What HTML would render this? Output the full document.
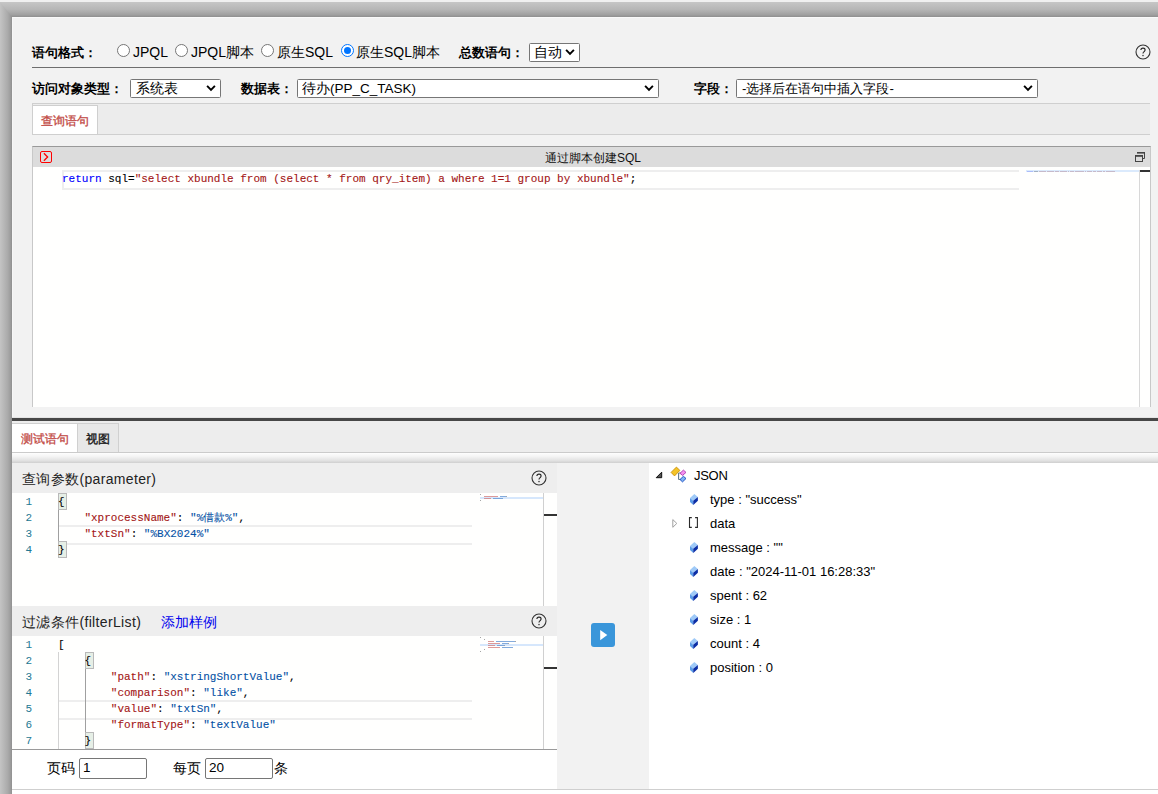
<!DOCTYPE html>
<html><head><meta charset="utf-8">
<style>
*{box-sizing:border-box}
html,body{margin:0;padding:0}
body{width:1158px;height:794px;overflow:hidden;position:relative;background:#fff;font-family:"Liberation Sans",sans-serif;color:#000}
.a{position:absolute}
.t{position:absolute;white-space:nowrap;line-height:1}
.b{font-weight:bold}
.lbl{font-size:13px;font-weight:bold}
.radio{position:absolute;width:13px;height:13px;border:1px solid #767676;border-radius:50%;background:#fff}
.radio.on{border:1px solid #0075ff;background:#fff}
.radio.on::after{content:"";position:absolute;left:2px;top:2px;width:7px;height:7px;border-radius:50%;background:#0075ff}
.sel{position:absolute;border:1px solid #767676;border-radius:1.5px;background:#fff}
.sel svg{position:absolute}
.help{position:absolute;width:15px;height:15px;border:1px solid #333;border-radius:50%;font-size:11px;text-align:center;line-height:13px;color:#222}
.mono{font-family:"Liberation Mono",monospace;font-size:11px;-webkit-text-stroke:0.1px}
.ln{position:absolute;width:20px;text-align:right;color:#237893;font-family:"Liberation Mono",monospace;font-size:11px;line-height:16px}
.k{color:#a31515}
.s{color:#0451a5}
.kw{color:#0000ff}
.str{color:#a31515}
.gem{position:absolute;width:9px;height:11px}
.tr{position:absolute;font-size:13px;white-space:nowrap;line-height:16px;color:#000}
</style></head><body>
<!-- top strip & shadow -->
<div class="a" style="left:0;top:0;width:1158px;height:2px;background:#f0f0f0"></div>
<div class="a" style="left:0;top:2px;width:1158px;height:15px;background:linear-gradient(#c6c6c6,#b6b6b6 50%,#a0a0a0 85%,#8f8f8f)"></div>
<div class="a" style="left:0;top:2px;width:12px;height:792px;background:linear-gradient(90deg,#c4c4c4,#aaaaaa 65%,#9a9a9a 90%,#8f8f8f);clip-path:polygon(0 0,12px 15px,12px 100%,0 100%)"></div>
<!-- main panel -->
<div class="a" style="left:12px;top:17px;width:1146px;height:777px;background:#f2f2f2;border-top:1px solid #f9f9f9;border-left:1px solid #f7f7f7"></div>

<!-- row 1 -->
<div class="t lbl" style="left:32px;top:46px">语句格式：</div>
<div class="radio" style="left:117px;top:44px"></div>
<div class="t" style="left:133px;top:45px;font-size:14px">JPQL</div>
<div class="radio" style="left:175px;top:44px"></div>
<div class="t" style="left:191px;top:45px;font-size:14px">JPQL脚本</div>
<div class="radio" style="left:261px;top:44px"></div>
<div class="t" style="left:277px;top:45px;font-size:14px">原生SQL</div>
<div class="radio on" style="left:341px;top:44px"></div>
<div class="t" style="left:356px;top:45px;font-size:14px">原生SQL脚本</div>
<div class="t lbl" style="left:459px;top:46px">总数语句：</div>
<div class="sel" style="left:529px;top:43px;width:51px;height:19px">
  <div class="t" style="left:4px;top:2px;font-size:13.5px">自动</div>
  <svg style="left:35px;top:4px" width="10" height="8" viewBox="0 0 10 8"><path d="M1.1 1.8 L5 5.9 L8.9 1.8" fill="none" stroke="#000" stroke-width="1.9"/></svg>
</div>
<svg class="a" style="left:1135px;top:44px" width="16" height="16" viewBox="0 0 16 16"><circle cx="8" cy="8" r="7" fill="none" stroke="#333" stroke-width="1.1"/><path d="M5.9 6.1 C5.9 4.8 6.8 4.1 8 4.1 C9.2 4.1 10.1 4.9 10.1 6 C10.1 7 9.4 7.4 8.8 7.9 C8.2 8.3 8 8.7 8 9.6" fill="none" stroke="#222" stroke-width="1.1"/><rect x="7.4" y="10.9" width="1.2" height="1.3" fill="#222"/></svg>
<div class="a" style="left:32px;top:67px;width:1118px;height:1px;background:#6e6e6e"></div>

<!-- row 2 -->
<div class="t lbl" style="left:32px;top:82px">访问对象类型：</div>
<div class="sel" style="left:130px;top:79px;width:91px;height:19px">
  <div class="t" style="left:5px;top:2px;font-size:13.5px">系统表</div>
  <svg style="left:75px;top:4px" width="10" height="8" viewBox="0 0 10 8"><path d="M1.1 1.8 L5 5.9 L8.9 1.8" fill="none" stroke="#000" stroke-width="1.9"/></svg>
</div>
<div class="t lbl" style="left:241px;top:82px">数据表：</div>
<div class="sel" style="left:297px;top:79px;width:362px;height:19px">
  <div class="t" style="left:4px;top:2px;font-size:13.5px">待办(PP_C_TASK)</div>
  <svg style="left:346px;top:4px" width="10" height="8" viewBox="0 0 10 8"><path d="M1.1 1.8 L5 5.9 L8.9 1.8" fill="none" stroke="#000" stroke-width="1.9"/></svg>
</div>
<div class="t lbl" style="left:694px;top:82px">字段：</div>
<div class="sel" style="left:736px;top:79px;width:302px;height:19px">
  <div class="t" style="left:5px;top:2px;font-size:13.25px">-选择后在语句中插入字段-</div>
  <svg style="left:286px;top:4px" width="10" height="8" viewBox="0 0 10 8"><path d="M1.1 1.8 L5 5.9 L8.9 1.8" fill="none" stroke="#000" stroke-width="1.9"/></svg>
</div>

<!-- tab bar top -->
<div class="a" style="left:32px;top:103px;width:1118px;height:32px;background:#ececec;border-top:1px solid #cfcfcf;border-bottom:1px solid #cfcfcf;border-left:1px solid #cfcfcf"></div>
<div class="a" style="left:32px;top:105px;width:66px;height:30px;background:#fff;border:1px solid #cfcfcf"></div>
<div class="t" style="left:41px;top:115px;font-size:12px;color:#c24a45;-webkit-text-stroke:0.3px #c24a45">查询语句</div>

<!-- editor panel -->
<div class="a" style="left:32px;top:146px;width:1119px;height:261px;background:#fffffe;border-top:1px solid #999;border-left:1px solid #c8c8c8;border-right:1px solid #c8c8c8"></div>
<div class="a" style="left:33px;top:147px;width:1117px;height:20px;background:#dcdcdc"></div>
<div class="a" style="left:40px;top:151px;width:12px;height:12px;border:1.6px solid #f00;border-radius:2px"></div>
<svg class="a" style="left:40px;top:151px" width="12" height="12" viewBox="0 0 12 12"><path d="M3.9 2.3 L7.6 6 L3.9 9.7" fill="none" stroke="#f00" stroke-width="1.3"/></svg>
<div class="t" style="left:545px;top:152px;font-size:12px;color:#111">通过脚本创建SQL</div>
<svg class="a" style="left:1134px;top:151px" width="12" height="12" viewBox="0 0 12 12"><path d="M3.5 1.5 H10.5 V7.5 H8.5" fill="none" stroke="#444" stroke-width="1"/><rect x="3" y="1" width="8" height="1.6" fill="#444"/><rect x="1.5" y="4.5" width="7" height="6" fill="none" stroke="#444" stroke-width="1"/><rect x="1" y="4" width="8" height="1.8" fill="#444"/></svg>
<div class="a" style="left:62px;top:170px;width:957px;height:20px;border:2px solid #eeeeee;border-right:none"></div>
<div class="t mono" style="left:62px;top:174px"><span class="kw">return</span> sql=<span class="str">"select xbundle from (select * from qry_item) a where 1=1 group by xbundle"</span>;</div>
<!-- minimap -->
<div class="a" style="left:1026px;top:170px;width:113px;height:2px;background:#dbeafc"></div>
<div class="a" style="left:1027px;top:171px;width:6px;height:1px;background:#8c9cf8;opacity:.6"></div>
<div class="a" style="left:1034px;top:171px;width:4px;height:1px;background:#7b8a9a;opacity:.6"></div>
<div class="a" style="left:1039px;top:171px;width:7px;height:1px;background:#b89aa8;opacity:.6"></div>
<div class="a" style="left:1047px;top:171px;width:7px;height:1px;background:#b89aa8;opacity:.6"></div>
<div class="a" style="left:1055px;top:171px;width:4px;height:1px;background:#b89aa8;opacity:.6"></div>
<div class="a" style="left:1060px;top:171px;width:7px;height:1px;background:#b89aa8;opacity:.6"></div>
<div class="a" style="left:1068px;top:171px;width:1px;height:1px;background:#b89aa8;opacity:.6"></div>
<div class="a" style="left:1070px;top:171px;width:4px;height:1px;background:#b89aa8;opacity:.6"></div>
<div class="a" style="left:1075px;top:171px;width:9px;height:1px;background:#b89aa8;opacity:.6"></div>
<div class="a" style="left:1085px;top:171px;width:1px;height:1px;background:#b89aa8;opacity:.6"></div>
<div class="a" style="left:1087px;top:171px;width:5px;height:1px;background:#b89aa8;opacity:.6"></div>
<div class="a" style="left:1093px;top:171px;width:3px;height:1px;background:#b89aa8;opacity:.6"></div>
<div class="a" style="left:1097px;top:171px;width:5px;height:1px;background:#b89aa8;opacity:.6"></div>
<div class="a" style="left:1103px;top:171px;width:2px;height:1px;background:#b89aa8;opacity:.6"></div>
<div class="a" style="left:1106px;top:171px;width:9px;height:1px;background:#b89aa8;opacity:.6"></div>
<div class="a" style="left:1139px;top:170px;width:1px;height:237px;background:#d8d8d8"></div>
<div class="a" style="left:1140px;top:170px;width:10px;height:2px;background:#333"></div>

<!-- splitter -->
<div class="a" style="left:12px;top:417px;width:1146px;height:1px;background:#e4e4e4"></div>
<div class="a" style="left:12px;top:418px;width:1146px;height:3px;background:#474747"></div>

<!-- bottom tab bar -->
<div class="a" style="left:12px;top:421px;width:1146px;height:32px;background:#ededed;border-bottom:1px solid #cbcbcb"></div>
<div class="a" style="left:12px;top:423px;width:66px;height:29px;background:#fff;border-top:1px solid #d0d0d0;border-right:1px solid #d0d0d0"></div>
<div class="t" style="left:21px;top:433px;font-size:12px;color:#c24a45;-webkit-text-stroke:0.3px #c24a45">测试语句</div>
<div class="a" style="left:77px;top:423px;width:42px;height:29px;background:#e8e8e8;border:1px solid #d0d0d0;border-bottom:none"></div>
<div class="t" style="left:86px;top:433px;font-size:12px;color:#1a1a1a;-webkit-text-stroke:0.35px #1a1a1a">视图</div>
<div class="a" style="left:12px;top:453px;width:1146px;height:10px;background:linear-gradient(#fefefe,#f4f4f4 35%,#e2e2e2 75%,#cfcfcf)"></div>

<!-- left panel -->
<div class="a" style="left:12px;top:463px;width:545px;height:30px;background:#eeeeee"></div>
<div class="t" style="left:22px;top:472px;font-size:14px;color:#222;letter-spacing:0.35px">查询参数(parameter)</div>
<svg class="a" style="left:531px;top:470px" width="16" height="16" viewBox="0 0 16 16"><circle cx="8" cy="8" r="7" fill="none" stroke="#333" stroke-width="1.1"/><path d="M5.9 6.1 C5.9 4.8 6.8 4.1 8 4.1 C9.2 4.1 10.1 4.9 10.1 6 C10.1 7 9.4 7.4 8.8 7.9 C8.2 8.3 8 8.7 8 9.6" fill="none" stroke="#222" stroke-width="1.1"/><rect x="7.4" y="10.9" width="1.2" height="1.3" fill="#222"/></svg>
<div class="a" style="left:12px;top:493px;width:545px;height:113px;background:#fffffe"></div>
<div class="ln" style="left:12px;top:494px">1<br>2<br>3<br>4</div>
<div class="a" style="left:58px;top:525px;width:414px;height:20px;border:2px solid #eeeeee;border-left:none;border-right:none"></div>
<div class="a" style="left:58px;top:509px;width:1px;height:32px;background:#a0a0a0"></div>
<div class="a" style="left:58px;top:493px;width:9px;height:17px;background:#e6efe6;border:1px solid #b9b9b9"></div>
<div class="a" style="left:58px;top:541px;width:9px;height:17px;background:#e6efe6;border:1px solid #b9b9b9"></div>
<div class="t mono" style="left:58px;top:494px;line-height:16px;white-space:pre">{
    <span class="k">"xprocessName"</span>: <span class="s">"%借款%"</span>,
    <span class="k">"txtSn"</span>: <span class="s">"%BX2024%"</span>
}</div>
<div class="a" style="left:480px;top:497px;width:63px;height:2px;background:#d6e7fc"></div>
<div class="a" style="left:480px;top:494px;width:1px;height:1px;background:#888;opacity:.75"></div>
<div class="a" style="left:484px;top:496px;width:14px;height:1px;background:#d27878;opacity:.75"></div>
<div class="a" style="left:500px;top:496px;width:6px;height:1px;background:#5b8fd0;opacity:.75"></div>
<div class="a" style="left:506px;top:496px;width:1px;height:1px;background:#888;opacity:.75"></div>
<div class="a" style="left:484px;top:498px;width:7px;height:1px;background:#d27878;opacity:.75"></div>
<div class="a" style="left:493px;top:498px;width:10px;height:1px;background:#5b8fd0;opacity:.75"></div>
<div class="a" style="left:480px;top:500px;width:1px;height:1px;background:#888;opacity:.75"></div>
<div class="a" style="left:543px;top:493px;width:1px;height:113px;background:#d0d0d0"></div>
<div class="a" style="left:544px;top:514px;width:13px;height:2px;background:#333"></div>

<div class="a" style="left:12px;top:606px;width:545px;height:30px;background:#eeeeee"></div>
<div class="t" style="left:22px;top:615px;font-size:14px;color:#222;letter-spacing:0.35px">过滤条件(filterList)</div>
<div class="t" style="left:161px;top:615px;font-size:14px;color:#0000ee">添加样例</div>
<svg class="a" style="left:531px;top:613px" width="16" height="16" viewBox="0 0 16 16"><circle cx="8" cy="8" r="7" fill="none" stroke="#333" stroke-width="1.1"/><path d="M5.9 6.1 C5.9 4.8 6.8 4.1 8 4.1 C9.2 4.1 10.1 4.9 10.1 6 C10.1 7 9.4 7.4 8.8 7.9 C8.2 8.3 8 8.7 8 9.6" fill="none" stroke="#222" stroke-width="1.1"/><rect x="7.4" y="10.9" width="1.2" height="1.3" fill="#222"/></svg>
<div class="a" style="left:12px;top:636px;width:545px;height:113px;background:#fffffe"></div>
<div class="ln" style="left:12px;top:637px">1<br>2<br>3<br>4<br>5<br>6<br>7</div>
<div class="a" style="left:58px;top:700px;width:414px;height:20px;border:2px solid #eeeeee;border-left:none;border-right:none"></div>
<div class="a" style="left:58px;top:652px;width:1px;height:97px;background:#d3d3d3"></div>
<div class="a" style="left:85px;top:668px;width:1px;height:64px;background:#a0a0a0"></div>
<div class="a" style="left:85px;top:652px;width:9px;height:17px;background:#e6efe6;border:1px solid #b9b9b9"></div>
<div class="a" style="left:85px;top:732px;width:9px;height:17px;background:#e6efe6;border:1px solid #b9b9b9"></div>
<div class="t mono" style="left:58px;top:637px;line-height:16px;white-space:pre">[
    {
        <span class="k">"path"</span>: <span class="s">"xstringShortValue"</span>,
        <span class="k">"comparison"</span>: <span class="s">"like"</span>,
        <span class="k">"value"</span>: <span class="s">"txtSn"</span>,
        <span class="k">"formatType"</span>: <span class="s">"textValue"</span>
    }</div>
<div class="a" style="left:480px;top:644px;width:63px;height:2px;background:#d6e7fc"></div>
<div class="a" style="left:480px;top:637px;width:1px;height:1px;background:#888;opacity:.75"></div>
<div class="a" style="left:484px;top:639px;width:1px;height:1px;background:#888;opacity:.75"></div>
<div class="a" style="left:488px;top:641px;width:6px;height:1px;background:#d27878;opacity:.75"></div>
<div class="a" style="left:496px;top:641px;width:19px;height:1px;background:#5b8fd0;opacity:.75"></div>
<div class="a" style="left:515px;top:641px;width:1px;height:1px;background:#888;opacity:.75"></div>
<div class="a" style="left:488px;top:643px;width:12px;height:1px;background:#d27878;opacity:.75"></div>
<div class="a" style="left:502px;top:643px;width:6px;height:1px;background:#5b8fd0;opacity:.75"></div>
<div class="a" style="left:508px;top:643px;width:1px;height:1px;background:#888;opacity:.75"></div>
<div class="a" style="left:488px;top:645px;width:7px;height:1px;background:#d27878;opacity:.75"></div>
<div class="a" style="left:497px;top:645px;width:7px;height:1px;background:#5b8fd0;opacity:.75"></div>
<div class="a" style="left:504px;top:645px;width:1px;height:1px;background:#888;opacity:.75"></div>
<div class="a" style="left:488px;top:647px;width:12px;height:1px;background:#d27878;opacity:.75"></div>
<div class="a" style="left:502px;top:647px;width:11px;height:1px;background:#5b8fd0;opacity:.75"></div>
<div class="a" style="left:484px;top:649px;width:1px;height:1px;background:#888;opacity:.75"></div>
<div class="a" style="left:480px;top:651px;width:1px;height:1px;background:#888;opacity:.75"></div>
<div class="a" style="left:543px;top:636px;width:1px;height:113px;background:#d0d0d0"></div>
<div class="a" style="left:544px;top:667px;width:13px;height:2px;background:#333"></div>
<div class="a" style="left:12px;top:749px;width:545px;height:1px;background:#9a9a9a"></div>

<!-- paging -->
<div class="a" style="left:12px;top:750px;width:545px;height:39px;background:#fff"></div>
<div class="t" style="left:47px;top:762px;font-size:13.5px">页码</div>
<div class="a" style="left:79px;top:758px;width:68px;height:21px;border:1px solid #767676;border-radius:2px;background:#fff"></div>
<div class="t" style="left:83px;top:761px;font-size:13.5px">1</div>
<div class="t" style="left:173px;top:762px;font-size:13.5px">每页</div>
<div class="a" style="left:205px;top:758px;width:68px;height:21px;border:1px solid #767676;border-radius:2px;background:#fff"></div>
<div class="t" style="left:209px;top:761px;font-size:13.5px">20</div>
<div class="t" style="left:274px;top:762px;font-size:13.5px">条</div>

<!-- middle -->
<div class="a" style="left:557px;top:463px;width:92px;height:326px;background:#f2f2f2"></div>
<div class="a" style="left:591px;top:623px;width:24px;height:24px;background:#3a96da;border-radius:3px"></div>
<svg class="a" style="left:591px;top:623px" width="24" height="24" viewBox="0 0 24 24"><path d="M9.2 7 L16.3 12.1 L9.2 17.2 Z" fill="#fff"/></svg>

<!-- right -->
<div class="a" style="left:649px;top:463px;width:509px;height:326px;background:#fff"></div>
<div class="a" style="left:12px;top:789px;width:1146px;height:1px;background:#cfcfcf"></div>
<div class="a" style="left:12px;top:790px;width:1146px;height:4px;background:#fff"></div>

<!-- tree -->
<svg class="a" style="left:650px;top:465px" width="20" height="20" viewBox="0 0 20 20"><path d="M11.7 7.2 V12.7 H6.2 Z" fill="#555" stroke="#111" stroke-width="1" stroke-linejoin="round"/></svg>
<svg class="a" style="left:666px;top:463px" width="26" height="24" viewBox="0 0 26 24"><path d="M12.6 10 V16.5 M12.6 10 H15 M12.6 16.5 H15" fill="none" stroke="#62788a" stroke-width="1.1"/><path d="M5.1 9.4 L10.4 4.1 L13.9 7.4 L8.5 12.9 Z" fill="#f4c428" stroke="#c8900c" stroke-width="0.9" stroke-linejoin="round"/><path d="M14 10.3 L17.4 7.1 L20 9.4 L16.5 12.4 Z" fill="#f590f0" stroke="#b040b0" stroke-width="0.9" stroke-linejoin="round"/><path d="M14 16.5 L17.4 13.3 L20 15.5 L16.5 18.9 Z" fill="#80b4f4" stroke="#1a4cc0" stroke-width="0.9" stroke-linejoin="round"/></svg>
<div class="tr" style="left:694px;top:468px;letter-spacing:-0.3px">JSON</div>
<svg class="a" style="left:689px;top:493px" width="10" height="13" viewBox="0 0 10 13"><path d="M1 5.1 L5.3 1 L8.9 4.1 L4.2 7.8 Z" fill="#9fcaf8"/><path d="M1 5.1 L4.2 7.8 L4.3 11.9 L1 9.1 Z" fill="#5b9ce8"/><path d="M4.2 7.8 L8.9 4.1 L8.9 7.8 L4.3 11.9 Z" fill="#0b2ea6"/></svg>
<div class="tr" style="left:710px;top:492px">type : &quot;success&quot;</div>
<svg class="a" style="left:668px;top:513px" width="40" height="20" viewBox="0 0 40 20"><path d="M4.8 6.6 L8.8 10.4 L4.8 14.3 Z" fill="none" stroke="#a0a0a0" stroke-width="1" stroke-linejoin="miter"/><path d="M23.8 4.6 H21.5 V14.4 H23.8 M27.1 4.6 H29.4 V14.4 H27.1" fill="none" stroke="#2a2a2a" stroke-width="1.1"/></svg>
<div class="tr" style="left:710px;top:516px">data</div>
<svg class="a" style="left:689px;top:541px" width="10" height="13" viewBox="0 0 10 13"><path d="M1 5.1 L5.3 1 L8.9 4.1 L4.2 7.8 Z" fill="#9fcaf8"/><path d="M1 5.1 L4.2 7.8 L4.3 11.9 L1 9.1 Z" fill="#5b9ce8"/><path d="M4.2 7.8 L8.9 4.1 L8.9 7.8 L4.3 11.9 Z" fill="#0b2ea6"/></svg>
<div class="tr" style="left:710px;top:540px">message : &quot;&quot;</div>
<svg class="a" style="left:689px;top:565px" width="10" height="13" viewBox="0 0 10 13"><path d="M1 5.1 L5.3 1 L8.9 4.1 L4.2 7.8 Z" fill="#9fcaf8"/><path d="M1 5.1 L4.2 7.8 L4.3 11.9 L1 9.1 Z" fill="#5b9ce8"/><path d="M4.2 7.8 L8.9 4.1 L8.9 7.8 L4.3 11.9 Z" fill="#0b2ea6"/></svg>
<div class="tr" style="left:710px;top:564px">date : &quot;2024-11-01 16:28:33&quot;</div>
<svg class="a" style="left:689px;top:589px" width="10" height="13" viewBox="0 0 10 13"><path d="M1 5.1 L5.3 1 L8.9 4.1 L4.2 7.8 Z" fill="#9fcaf8"/><path d="M1 5.1 L4.2 7.8 L4.3 11.9 L1 9.1 Z" fill="#5b9ce8"/><path d="M4.2 7.8 L8.9 4.1 L8.9 7.8 L4.3 11.9 Z" fill="#0b2ea6"/></svg>
<div class="tr" style="left:710px;top:588px">spent : 62</div>
<svg class="a" style="left:689px;top:613px" width="10" height="13" viewBox="0 0 10 13"><path d="M1 5.1 L5.3 1 L8.9 4.1 L4.2 7.8 Z" fill="#9fcaf8"/><path d="M1 5.1 L4.2 7.8 L4.3 11.9 L1 9.1 Z" fill="#5b9ce8"/><path d="M4.2 7.8 L8.9 4.1 L8.9 7.8 L4.3 11.9 Z" fill="#0b2ea6"/></svg>
<div class="tr" style="left:710px;top:612px">size : 1</div>
<svg class="a" style="left:689px;top:637px" width="10" height="13" viewBox="0 0 10 13"><path d="M1 5.1 L5.3 1 L8.9 4.1 L4.2 7.8 Z" fill="#9fcaf8"/><path d="M1 5.1 L4.2 7.8 L4.3 11.9 L1 9.1 Z" fill="#5b9ce8"/><path d="M4.2 7.8 L8.9 4.1 L8.9 7.8 L4.3 11.9 Z" fill="#0b2ea6"/></svg>
<div class="tr" style="left:710px;top:636px">count : 4</div>
<svg class="a" style="left:689px;top:661px" width="10" height="13" viewBox="0 0 10 13"><path d="M1 5.1 L5.3 1 L8.9 4.1 L4.2 7.8 Z" fill="#9fcaf8"/><path d="M1 5.1 L4.2 7.8 L4.3 11.9 L1 9.1 Z" fill="#5b9ce8"/><path d="M4.2 7.8 L8.9 4.1 L8.9 7.8 L4.3 11.9 Z" fill="#0b2ea6"/></svg>
<div class="tr" style="left:710px;top:660px">position : 0</div>
</body></html>
